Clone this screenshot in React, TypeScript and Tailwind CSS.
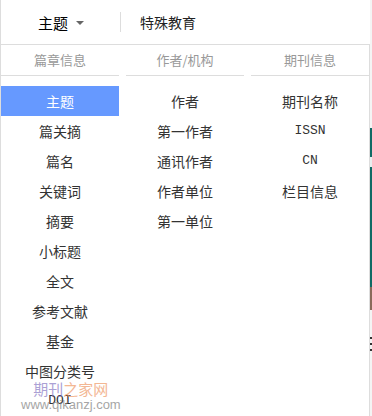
import React from "react";

const col1 = ["主题", "篇关摘", "篇名", "关键词", "摘要", "小标题", "全文", "参考文献", "基金", "中图分类号", "DOI"];
const col2 = ["作者", "第一作者", "通讯作者", "作者单位", "第一单位"];
const col3 = ["期刊名称", "ISSN", "CN", "栏目信息"];

const cjk = { fontFamily: '"Noto Sans CJK SC", "Liberation Sans", sans-serif' };

function Item({ text, active }: { text: string; active?: boolean }) {
  const latin = /^[A-Z]+$/.test(text);
  return (
    <div
      className={`h-[30px] flex items-center justify-center text-[14px] ${active ? "bg-[#6699ff] text-white" : "text-[#333]"}`}
      style={latin ? { fontFamily: '"Liberation Mono", monospace', fontSize: 13 } : undefined}
    >
      {text}
    </div>
  );
}

function Column({ title, items, activeFirst }: { title: string; items: string[]; activeFirst?: boolean }) {
  return (
    <div className="w-[118px] flex flex-col">
      <div className="h-[31px] border-b border-[#ddd] flex items-center justify-center text-[13px] text-[#999]">
        {title}
      </div>
      <div className="pt-[10px] flex flex-col">
        {items.map((t, i) => (
          <Item key={t} text={t} active={activeFirst && i === 0} />
        ))}
      </div>
    </div>
  );
}

export default function App() {
  return (
    <div className="w-[372px] h-[416px] bg-white flex relative overflow-hidden" style={cjk}>
      <div className="w-[370px] flex flex-col border-l border-[#ddd]">
        <div className="h-[44px] flex items-center">
          <div className="w-[118px] flex items-center justify-center gap-[8px] pl-[2px]">
            <span className="text-[15px] text-black leading-none">主题</span>
            <span className="w-0 h-0 border-l-[4px] border-r-[4px] border-t-[4px] border-l-transparent border-r-transparent border-t-[#666] mt-[1px]" />
          </div>
          <div className="w-px h-[20px] bg-[#ddd] ml-[1px]" />
          <div className="pl-[19px] text-[14px] text-[#222] leading-none">特殊教育</div>
        </div>
        <div className="flex-1 border-t border-r border-[#ddd] flex gap-[7px]">
          <Column title="篇章信息" items={col1} activeFirst />
          <Column title="作者/机构" items={col2} />
          <Column title="期刊信息" items={col3} />
        </div>
      </div>
      <div className="w-[2px] flex flex-col bg-[#f4f4f4]">
        <div className="h-[128px]" />
        <div className="h-[29px] bg-[#0f6b65]" />
        <div className="h-[10px] bg-[#e8eeee]" />
        <div className="h-[120px] bg-[#0f6b65]" />
        <div className="h-[23px] bg-[#8a6a5a]" />
        <div className="h-[27px]" />
        <div className="h-[2px] bg-[#333]" />
        <div className="h-[4px]" />
        <div className="h-[2px] bg-[#333]" />
        <div className="h-[4px]" />
        <div className="h-[2px] bg-[#333]" />
      </div>
      <div className="absolute left-[21px] top-[380px] flex flex-col items-center pointer-events-none opacity-75">
        <div className="text-[15px] leading-[17px]">
          <span className="text-[#8f82c8]">期刊</span>
          <span className="text-[#f0a070]">之家网</span>
        </div>
        <div className="text-[13px] leading-[14px] text-[#888] mt-[1px]" style={{ fontFamily: '"Liberation Sans", sans-serif' }}>
          www.qikanzj.com
        </div>
      </div>
    </div>
  );
}
